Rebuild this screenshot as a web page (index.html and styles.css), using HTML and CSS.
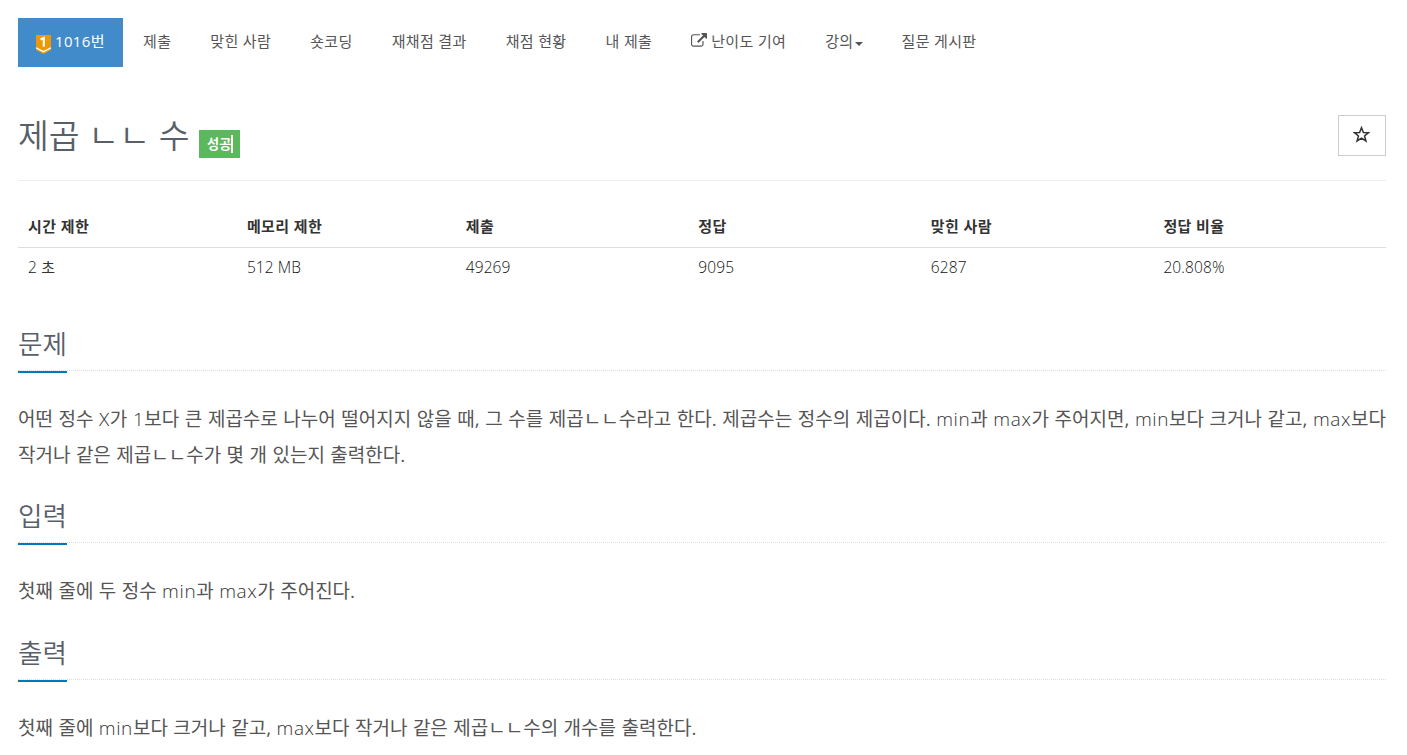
FILE: index.html
```html
<!DOCTYPE html>
<html lang="ko">
<head>
    <meta charset="UTF-8">
    <meta name="viewport" content="width=device-width, initial-scale=1.0">
    <title>1016번: 제곱 ㄴㄴ 수</title>
    <link rel="stylesheet" href="styles.css">
</head>
<body>
    <div class="container">
        <ul class="problem-menu">
            <li class="active"><a>
                <svg class="tier" viewBox="0 0 15 19">
                    <path fill="#ec9a00" d="M0 0h15v15l-7.500 4L0 15z"/>
                    <path fill="none" stroke="#fff" stroke-width="1.300" d="M0 12.800l7.500 3.900L15 12.800"/>
                    <path fill="none" stroke="#fff" stroke-width="2.200" d="M4.600 4.400L7.800 3v8.700"/>
                </svg><span>1016번</span></a></li>
            <li><a>제출</a></li>
            <li><a>맞힌 사람</a></li>
            <li><a>숏코딩</a></li>
            <li><a>재채점 결과</a></li>
            <li><a>채점 현황</a></li>
            <li><a>내 제출</a></li>
            <li><a>
                <svg class="external" viewBox="0 0 1792 1792">
                    <path d="M1408 928v320q0 119-84.500 203.500T1120 1536H288q-119 0-203.500-84.500T0 1248V416q0-119 84.500-203.500T288 128h704q14 0 23 9t9 23v64q0 14-9 23t-23 9H288q-66 0-113 47t-47 113v832q0 66 47 113t113 47h832q66 0 113-47t47-113V928q0-14 9-23t23-9h64q14 0 23 9t9 23zm384-864v512q0 26-19 45t-45 19-45-19l-176-176-652 652q-10 10-23 10t-23-10L695 983q-10-10-10-23t10-23l652-652-176-176q-19-19-19-45t19-45 45-19h512q26 0 45 19t19 45z"/>
                </svg><span>난이도 기여</span></a></li>
            <li><a>강의<b class="caret"></b></a></li>
            <li><a>질문 게시판</a></li>
        </ul>

        <div class="page-header">
            <h1>제곱 ㄴㄴ 수</h1>
            <span class="label-success"><span>성공</span></span>
            <button class="favorite">
                <svg viewBox="0 0 18 18">
                    <path fill="none" stroke="#333" stroke-width="1.600" d="M9 1.800l2 5.100 5.400.2-4.200 3.400 1.500 5.300L9 12.800l-4.700 3 1.500-5.300L1.600 7.100l5.400-.2z"/>
                </svg>
            </button>
        </div>

        <table class="table">
            <thead>
                <tr>
                    <th class="narrow">시간 제한</th>
                    <th class="narrow">메모리 제한</th>
                    <th>제출</th>
                    <th>정답</th>
                    <th>맞힌 사람</th>
                    <th>정답 비율</th>
                </tr>
            </thead>
            <tbody>
                <tr>
                    <td><i>2</i> 초</td>
                    <td><i>512 MB</i></td>
                    <td><i>49269</i></td>
                    <td><i>9095</i></td>
                    <td><i>6287</i></td>
                    <td><i>20.808%</i></td>
                </tr>
            </tbody>
        </table>

        <section>
            <div class="headline"><h2>문제</h2></div>
            <p>어떤 정수 <i>X</i>가 <i>1</i>보다 큰 제곱수로 나누어 떨어지지 않을 때, 그 수를 제곱ㄴㄴ수라고 한다. 제곱수는 정수의 제곱이다. <i>min</i>과 <i>max</i>가 주어지면, <i>min</i>보다 크거나 같고, <i>max</i>보다 작거나 같은 제곱ㄴㄴ수가 몇 개 있는지 출력한다.</p>
        </section>
        <section>
            <div class="headline"><h2>입력</h2></div>
            <p>첫째 줄에 두 정수 <i>min</i>과 <i>max</i>가 주어진다.</p>
        </section>
        <section>
            <div class="headline"><h2>출력</h2></div>
            <p>첫째 줄에 <i>min</i>보다 크거나 같고, <i>max</i>보다 작거나 같은 제곱ㄴㄴ수의 개수를 출력한다.</p>
        </section>
    </div>
</body>
</html>
```
FILE: styles.css
```css
* {
    box-sizing: border-box;
}
body {
    margin: 0;
    background: #fff;
    color: #333;
    font-family: "Open Sans", "Noto Sans CJK KR", sans-serif;
    font-size: 15px;
    line-height: 1.6;
    overflow: hidden;
}
/* latin letters and digits are set lighter than hangul */
i {
    font-style: normal;
    font-weight: 300;
}
.container {
    width: 1368px;
    margin: 18px 0 0 18px;
}
/* menu */
.problem-menu {
    display: flex;
    gap: 2px;
    margin: 0;
    padding: 0;
    list-style: none;
    letter-spacing: 0.35px;
}
.problem-menu a {
    display: flex;
    align-items: center;
    height: 49px;
    padding: 0 19px 3px 18px;
    color: #555;
    white-space: nowrap;
}
.problem-menu .active a {
    width: 105px;
    padding: 0 0 3px 18px;
    background: #428bca;
    color: #fff;
}
.tier {
    width: 15px;
    height: 19px;
    margin: 6px 4px 0 0;
}
.external {
    width: 16px;
    height: 16px;
    margin-right: 4px;
    fill: #555;
}
.caret {
    margin: 5px 0 0 1px;
    border-top: 4px solid #555;
    border-left: 4px solid transparent;
    border-right: 4px solid transparent;
}
/* title */
.page-header {
    display: flex;
    align-items: flex-start;
    height: 114px;
    padding-top: 48px;
    border-bottom: 1px solid #eee;
}
h1 {
    width: 181px;
    margin: -7px 0 0;
    color: #585f69;
    font-size: 33.5px;
    font-weight: 350;
    line-height: 54px;
    white-space: nowrap;
}
.label-success {
    display: flex;
    align-items: center;
    width: 41px;
    margin-top: 15px;
    padding: 0 0 0 8px;
    height: 28px;
    background: #5cb85c;
    color: #fff;
    font-size: 13.2px;
    font-weight: bold;
    line-height: 18px;
}
.label-success span {
    width: 26px;
    height: 18px;
    border-right: 2px solid #fff;
    white-space: nowrap;
}
.favorite {
    display: flex;
    align-items: center;
    justify-content: center;
    width: 48px;
    height: 41px;
    margin-left: auto;
    padding: 0 1px 2px 0;
    border: 1px solid #ccc;
    background: #fff;
}
.favorite svg {
    width: 17px;
    height: 17px;
}
/* limits and statistics */
.table {
    width: 100%;
    margin-top: 24px;
    border-collapse: collapse;
    table-layout: fixed;
    letter-spacing: 0.4px;
}
.table th,
.table td {
    width: 17%;
    height: 42px;
    padding: 0 10px;
    text-align: left;
}
.table td {
    padding-bottom: 1px;
}
.table .narrow {
    width: 16%;
}
.table th {
    border-bottom: 1px solid #ddd;
}
.table i {
    color: #111;
    font-size: 15.5px;
    letter-spacing: 0.1px;
}
/* statement */
.headline {
    height: 50px;
    margin-top: 20.3px;
    border-bottom: 1px dotted #ddd;
}
.table + section .headline {
    margin-top: 32px;
}
h2 {
    display: inline-block;
    height: 52px;
    margin: 0;
    border-bottom: 2px solid #0078bd;
    color: #585f69;
    font-size: 26.6px;
    font-weight: 350;
    line-height: 46px;
}
section p {
    margin: 30px 0 0;
    color: #555;
    font-size: 19px;
    line-height: 36px;
    word-spacing: 0.5px;
    text-align: justify;
}
section p i {
    color: #333;
    letter-spacing: 0.6px;
}
```
